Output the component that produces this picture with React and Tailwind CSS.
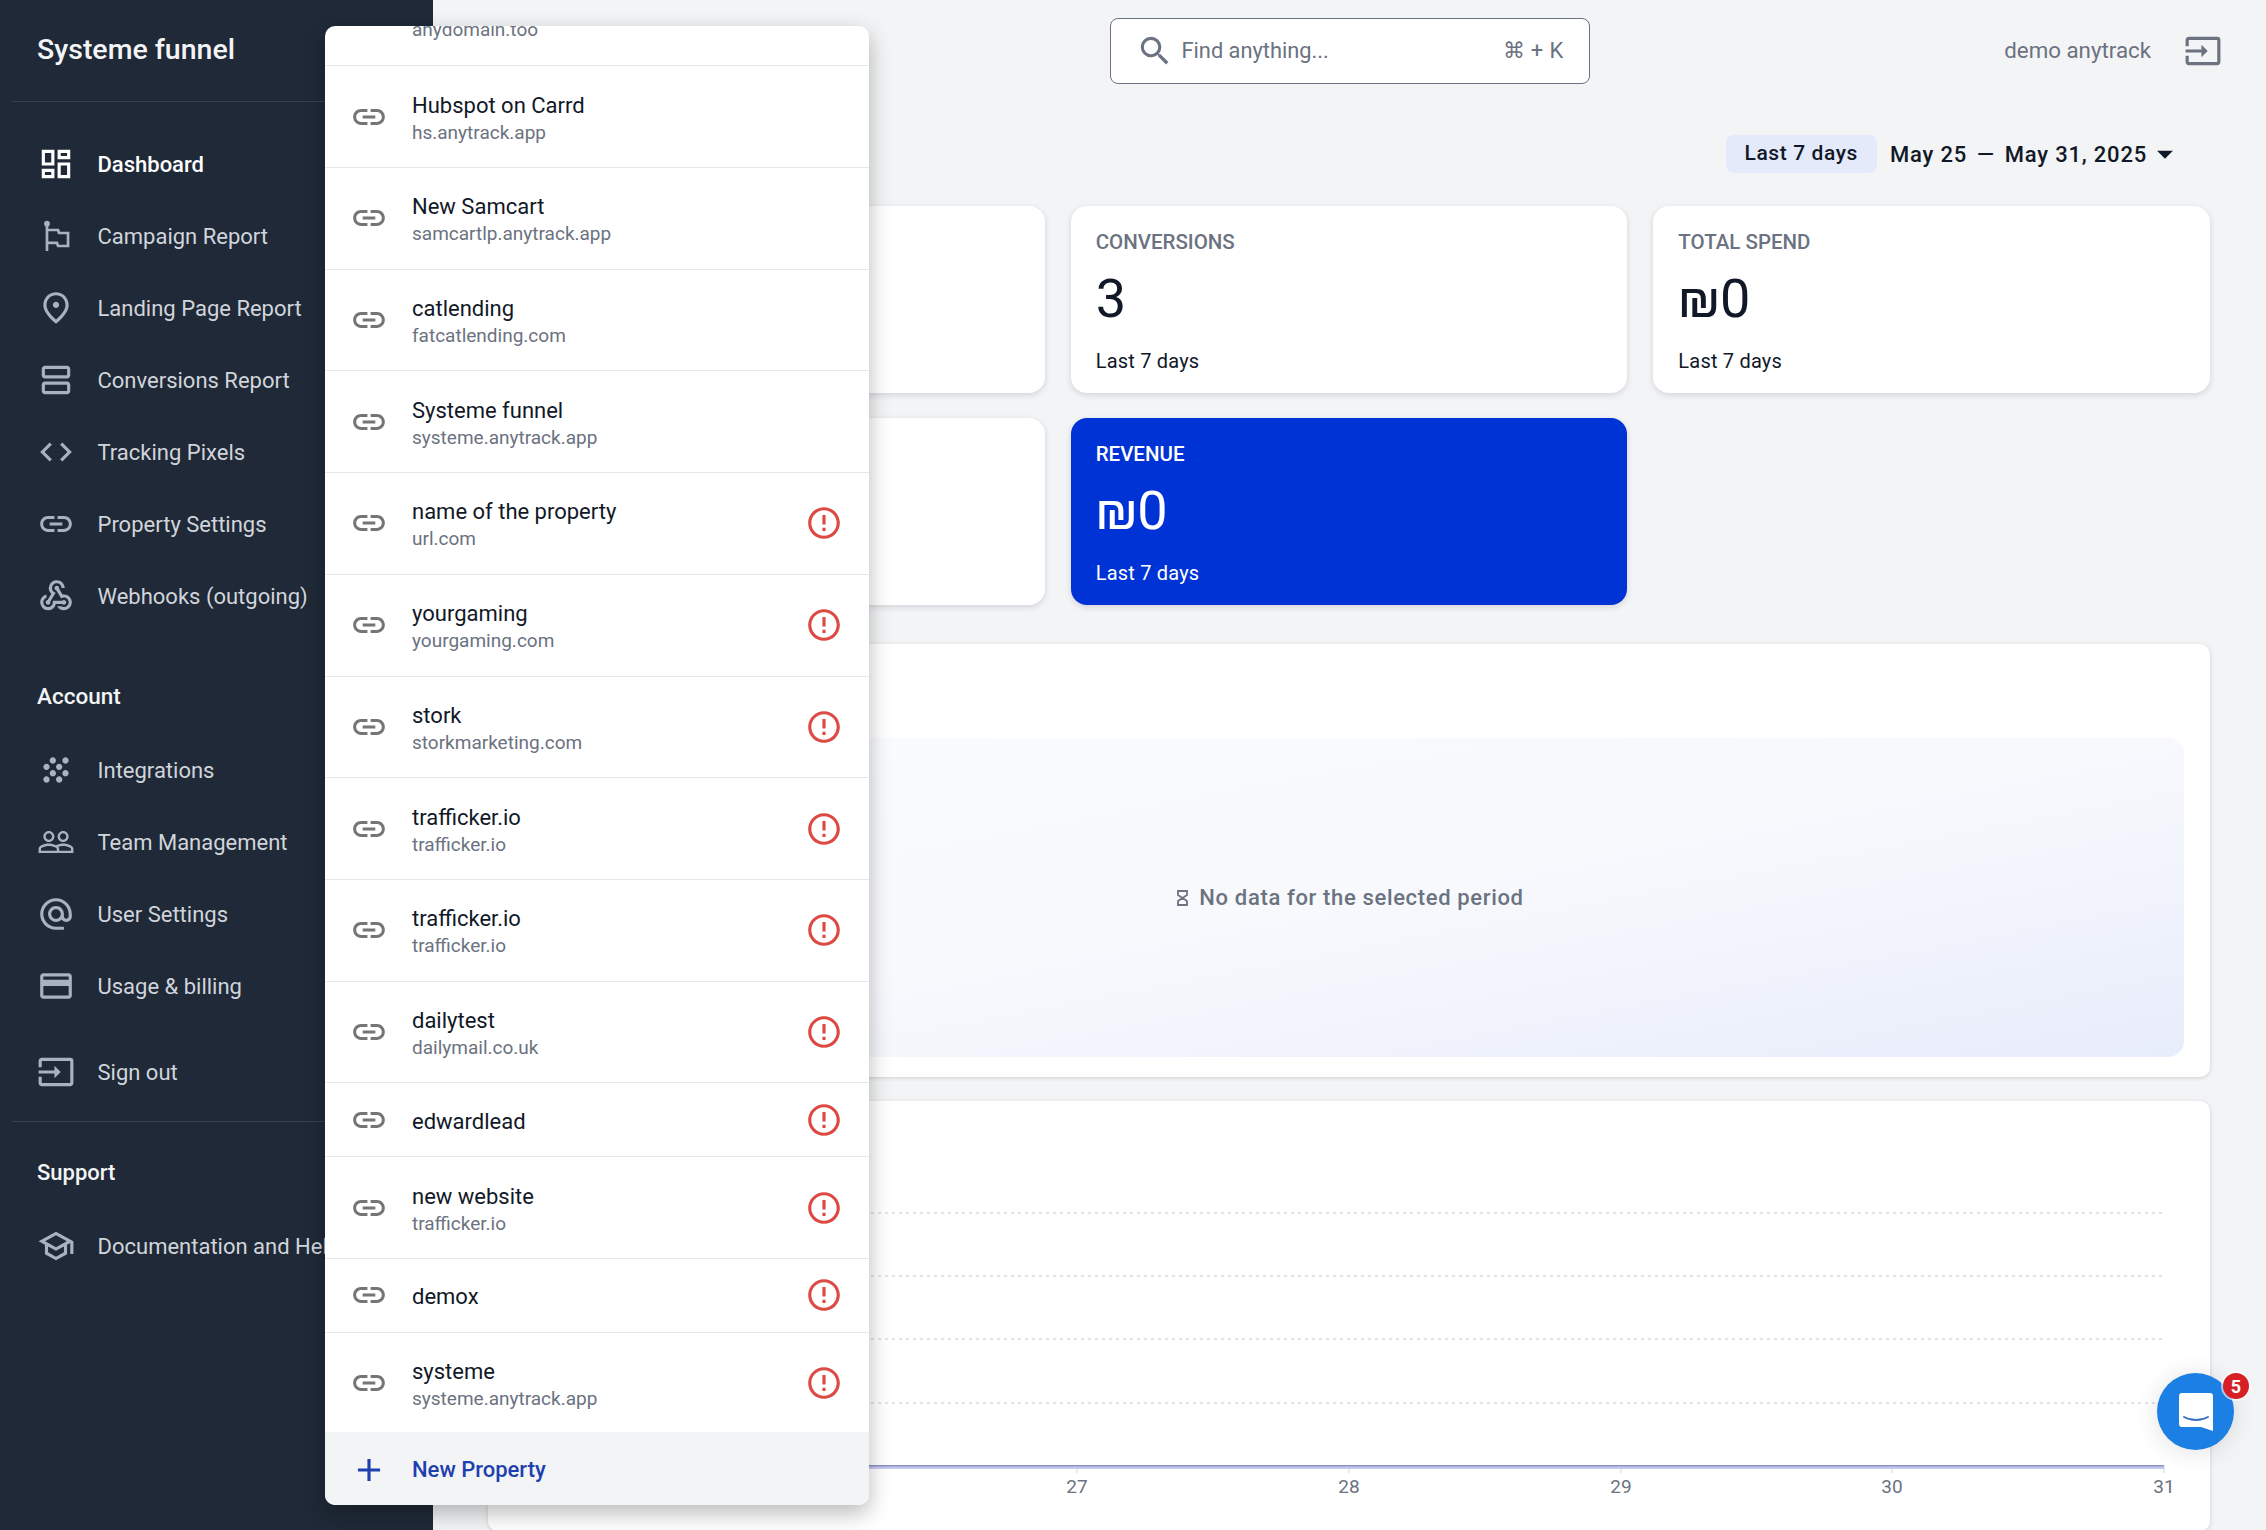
import {
  MdOutlineDashboard,
  MdOutlinePlace,
  MdOutlineViewAgenda,
  MdCode,
  MdLink,
  MdOutlineWebhook,
  MdOutlineGrain,
  MdPeopleOutline,
  MdAlternateEmail,
  MdOutlineCreditCard,
  MdOutlineInput,
  MdOutlineSchool,
  MdErrorOutline,
  MdSearch,
  MdAdd,
  MdArrowDropDown,
} from 'react-icons/md';

const CampaignIcon = ({ size, className }) => (
  <svg width={size} height={size} viewBox="0 0 24 24" fill="none" stroke="currentColor" strokeWidth="1.7" className={className}>
    <circle cx="6.3" cy="4.2" r="1.8" fill="currentColor" stroke="none" />
    <path d="M6.3 5v16.5" />
    <path d="M6.3 8.2h7l.6 1.9h5.7v8.2h-6.3l-.7-1.9H6.3" />
  </svg>
);

const reportItems = [
  { label: 'Dashboard', icon: MdOutlineDashboard, active: true },
  { label: 'Campaign Report', icon: CampaignIcon },
  { label: 'Landing Page Report', icon: MdOutlinePlace },
  { label: 'Conversions Report', icon: MdOutlineViewAgenda },
  { label: 'Tracking Pixels', icon: MdCode },
  { label: 'Property Settings', icon: MdLink },
  { label: 'Webhooks (outgoing)', icon: MdOutlineWebhook },
];

const accountItems = [
  { label: 'Integrations', icon: MdOutlineGrain },
  { label: 'Team Management', icon: MdPeopleOutline },
  { label: 'User Settings', icon: MdAlternateEmail },
  { label: 'Usage & billing', icon: MdOutlineCreditCard },
];

const properties = [
  { name: 'Hubspot on Carrd', url: 'hs.anytrack.app' },
  { name: 'New Samcart', url: 'samcartlp.anytrack.app' },
  { name: 'catlending', url: 'fatcatlending.com' },
  { name: 'Systeme funnel', url: 'systeme.anytrack.app' },
  { name: 'name of the property', url: 'url.com', alert: true },
  { name: 'yourgaming', url: 'yourgaming.com', alert: true },
  { name: 'stork', url: 'storkmarketing.com', alert: true },
  { name: 'trafficker.io', url: 'trafficker.io', alert: true },
  { name: 'trafficker.io', url: 'trafficker.io', alert: true },
  { name: 'dailytest', url: 'dailymail.co.uk', alert: true },
  { name: 'edwardlead', alert: true },
  { name: 'new website', url: 'trafficker.io', alert: true },
  { name: 'demox', alert: true },
  { name: 'systeme', url: 'systeme.anytrack.app', alert: true },
];

const ticks = [
  { label: '27', x: 589 },
  { label: '28', x: 861 },
  { label: '29', x: 1133 },
  { label: '30', x: 1404 },
  { label: '31', x: 1676 },
];

const NavItem = ({ item }) => {
  const Icon = item.icon;
  return (
    <div className={`flex h-[72px] items-center whitespace-nowrap text-[22px] ${item.active ? 'font-medium text-white' : 'text-[#d1d5db]'}`}>
      <div className="flex w-[97.5px] shrink-0 justify-center pl-[14px]">
        <Icon size={38} className={item.active ? 'text-white' : 'text-[#a9b2bf]'} />
      </div>
      <span>{item.label}</span>
    </div>
  );
};

const Sidebar = () => (
  <aside className="flex h-full w-[433px] shrink-0 flex-col overflow-hidden bg-[#1f2937]">
    <div className="mx-3 flex h-[102px] shrink-0 items-center border-b border-[#374151] pl-[25px] text-[28.5px] font-medium text-gray-100">
      Systeme funnel
    </div>
    <nav className="flex flex-col pt-[26px]">
      {reportItems.map((item) => (
        <NavItem key={item.label} item={item} />
      ))}
    </nav>
    <div className="mt-[47px] pl-[37px] text-[22.5px] leading-[34px] font-medium text-gray-100">Account</div>
    <nav className="mt-[21px] flex flex-col">
      {accountItems.map((item) => (
        <NavItem key={item.label} item={item} />
      ))}
    </nav>
    <div className="mt-[14px]">
      <NavItem item={{ label: 'Sign out', icon: MdOutlineInput }} />
    </div>
    <div className="mx-3 mt-[13px] border-b border-[#374151]" />
    <div className="mt-[34px] pl-[37px] text-[22px] leading-[34px] font-medium text-gray-100">Support</div>
    <div className="mt-[20px]">
      <NavItem item={{ label: 'Documentation and Help', icon: MdOutlineSchool }} />
    </div>
  </aside>
);

const PropertyRow = ({ property }) => (
  <div className={`flex shrink-0 items-center border-b border-gray-200 ${property.url ? 'h-[101.7px]' : 'h-[74px]'}`}>
    <div className="flex w-[87px] shrink-0 justify-center">
      <MdLink size={38} className="text-[#757575]" />
    </div>
    <div className="flex-1 pt-[3px]">
      <div className="text-[22px] leading-[29px] text-[#111827]">{property.name}</div>
      {property.url && <div className="text-[19px] leading-[26px] text-[#6b7280]">{property.url}</div>}
    </div>
    {property.alert && <MdErrorOutline size={38} className="mr-[26px] text-[#dc4a44]" />}
  </div>
);

const PropertyMenu = () => (
  <div className="absolute top-[26px] left-[325px] z-20 flex h-[1479px] w-[544px] flex-col overflow-hidden rounded-[10px] bg-white shadow-[0_8px_22px_rgba(0,0,0,0.28)]">
    <div className="flex-1 overflow-hidden">
      {/* list is scrolled, only the url of the first row still shows */}
      <div className="h-[40.4px] overflow-hidden border-b border-gray-200 pl-[87px]">
        <div className="-mt-[9px] text-[19px] leading-[26px] text-[#6b7280]">anydomain.too</div>
      </div>
      {properties.map((property, idx) => (
        <PropertyRow key={idx} property={property} />
      ))}
    </div>
    <div className="flex h-[73px] shrink-0 items-center bg-gray-100 pt-[2px]">
      <div className="flex w-[87px] shrink-0 justify-center">
        <MdAdd size={38} className="text-[#1e40af]" />
      </div>
      <span className="text-[22px] font-medium text-[#1e40af]">New Property</span>
    </div>
  </div>
);

const Shekel = () => <span>₪</span>;

const StatCard = ({ title, value, highlight }) => (
  <div className={`h-[187px] rounded-[16px] pt-[22px] pl-[25px] shadow-[0_2px_6px_rgba(17,24,39,0.14)] ${highlight ? 'bg-[#0033d6] text-white' : 'bg-white text-[#111827]'}`}>
    <div className={`text-[20.5px] leading-[28px] font-medium uppercase ${highlight ? 'text-white' : 'text-[#6b7280]'}`}>{title}</div>
    <div className="mt-[8px] h-[70px] text-[54px] leading-[70px]">{value}</div>
    <div className="mt-[13px] text-[20px] leading-[28px] tracking-[0.2px]">Last 7 days</div>
  </div>
);

const Header = () => (
  <header className="grid h-[101px] shrink-0 grid-cols-[1fr_480px_1fr] items-center">
    <div />
    <div className="flex h-[66px] items-center rounded-[8px] border border-[#6b7280] bg-white pr-[25px] pl-[25px]">
      <MdSearch size={38} className="text-[#6b7280]" />
      <span className="ml-[8px] flex-1 pt-[2px] text-[21.8px] text-[#6b7280]">Find anything...</span>
      <span className="text-[22px] tracking-[0.3px] text-[#6b7280]">⌘ + K</span>
    </div>
    <div className="flex items-center justify-end pr-[44px]">
      <span className="text-[22.3px] text-[#6b7280]">demo anytrack</span>
      <MdOutlineInput size={38} className="ml-[33px] text-[#6b7280]" />
    </div>
  </header>
);

const DateRow = () => (
  <div className="mt-[34px] flex h-[39px] items-center justify-end pr-[82px] text-[#111827]">
    <div className="flex h-full items-center rounded-[8px] bg-[#e5eafb] px-[19px] text-[21px] font-medium tracking-[0.6px]">Last 7 days</div>
    <div className="ml-[13px] flex items-center gap-[10px] text-[22px] font-medium tracking-[0.8px]">
      <span>May 25</span>
      <span>—</span>
      <span>May 31, 2025</span>
    </div>
    <MdArrowDropDown size={38} className="-ml-[1px]" />
  </div>
);

const ChatBubble = () => (
  <div className="absolute top-[1373px] left-[2157px] z-10 flex h-[77px] w-[77px] items-center justify-center rounded-full bg-[#1b7fe3] shadow-[0_2px_24px_rgba(0,0,0,0.12)]">
    <svg width="34" height="38" viewBox="0 0 34 38">
      <path d="M3 0h28a3 3 0 0 1 3 3v35l-12-4H3a3 3 0 0 1-3-3V3a3 3 0 0 1 3-3z" fill="#fff" />
      <path d="M5 24c7 4 17 4 24 0" fill="none" stroke="#3d6fc6" strokeWidth="2" strokeLinecap="round" />
    </svg>
    <div className="absolute top-0 -right-[15px] flex h-[26px] w-[26px] items-center justify-center rounded-full bg-[#d71f26] text-[18px] font-bold text-white shadow-[0_0_0_2px_rgba(255,255,255,0.6)]">5</div>
  </div>
);

const SalesChart = () => (
  <svg width="1722" height="430" className="block">
    {[112, 175, 238, 302].map((y) => (
      <line key={y} x1="40" x2="1674" y1={y} y2={y} stroke="#d8dbe0" strokeWidth="1.5" strokeDasharray="3 4" />
    ))}
    {ticks.map((t) => (
      <g key={t.label}>
        <line x1={t.x} x2={t.x} y1="364" y2="372" stroke="#d1d5db" />
        <text x={t.x} y="392" textAnchor="middle" fontSize="19" fill="#6b7280" fontFamily="Roboto, sans-serif">{t.label}</text>
      </g>
    ))}
    <rect x="40" y="365" width="1636" height="3" fill="#c5c8ea" />
    <rect x="40" y="364" width="1636" height="1.5" fill="#8b93c4" />
  </svg>
);

const Dashboard = () => (
  <main className="flex h-full min-w-0 flex-1 flex-col overflow-hidden bg-[#f3f4f6]">
    <Header />
    <DateRow />
    <div className="mt-[33px] mr-[56px] ml-[55px] flex flex-col">
      <div className="grid grid-cols-3 gap-x-[26px] gap-y-[25px]">
        <StatCard title="Clicks" value="0" />
        <StatCard title="Conversions" value="3" />
        <StatCard title="Total Spend" value={<><Shekel />0</>} />
        <StatCard title="Leads" value="0" />
        <StatCard title="Revenue" value={<><Shekel />0</>} highlight />
      </div>
      <section className="mt-[39px] h-[433px] rounded-[10px] bg-white px-[26px] pt-[94px] shadow-[0_1px_4px_rgba(17,24,39,0.16)]">
        <div className="flex h-[319px] items-center justify-center rounded-[16px] bg-linear-to-br from-[#fafbfd] via-[#f8f9fd] to-[#e8edfb] pl-[3px] text-[22px] font-medium tracking-[0.65px] text-[#6b7280]">
          <svg width="11" height="16" viewBox="0 0 11 16" className="mr-[11px]" fill="none" stroke="#6b7280" strokeWidth="1.8">
            <path d="M1 1h9v4L5.5 8l4.5 3v4H1v-4l4.5-3L1 5z" />
          </svg>
          No data for the selected period
        </div>
      </section>
      <section className="mt-[24px] h-[430px] overflow-hidden rounded-[10px] bg-white shadow-[0_1px_4px_rgba(17,24,39,0.16)]">
        <SalesChart />
      </section>
    </div>
  </main>
);

export default function App() {
  return (
    <div className="relative flex h-[1530px] w-[2266px] overflow-hidden font-['Roboto',sans-serif]">
      <Sidebar />
      <Dashboard />
      <PropertyMenu />
      <ChatBubble />
    </div>
  );
}
